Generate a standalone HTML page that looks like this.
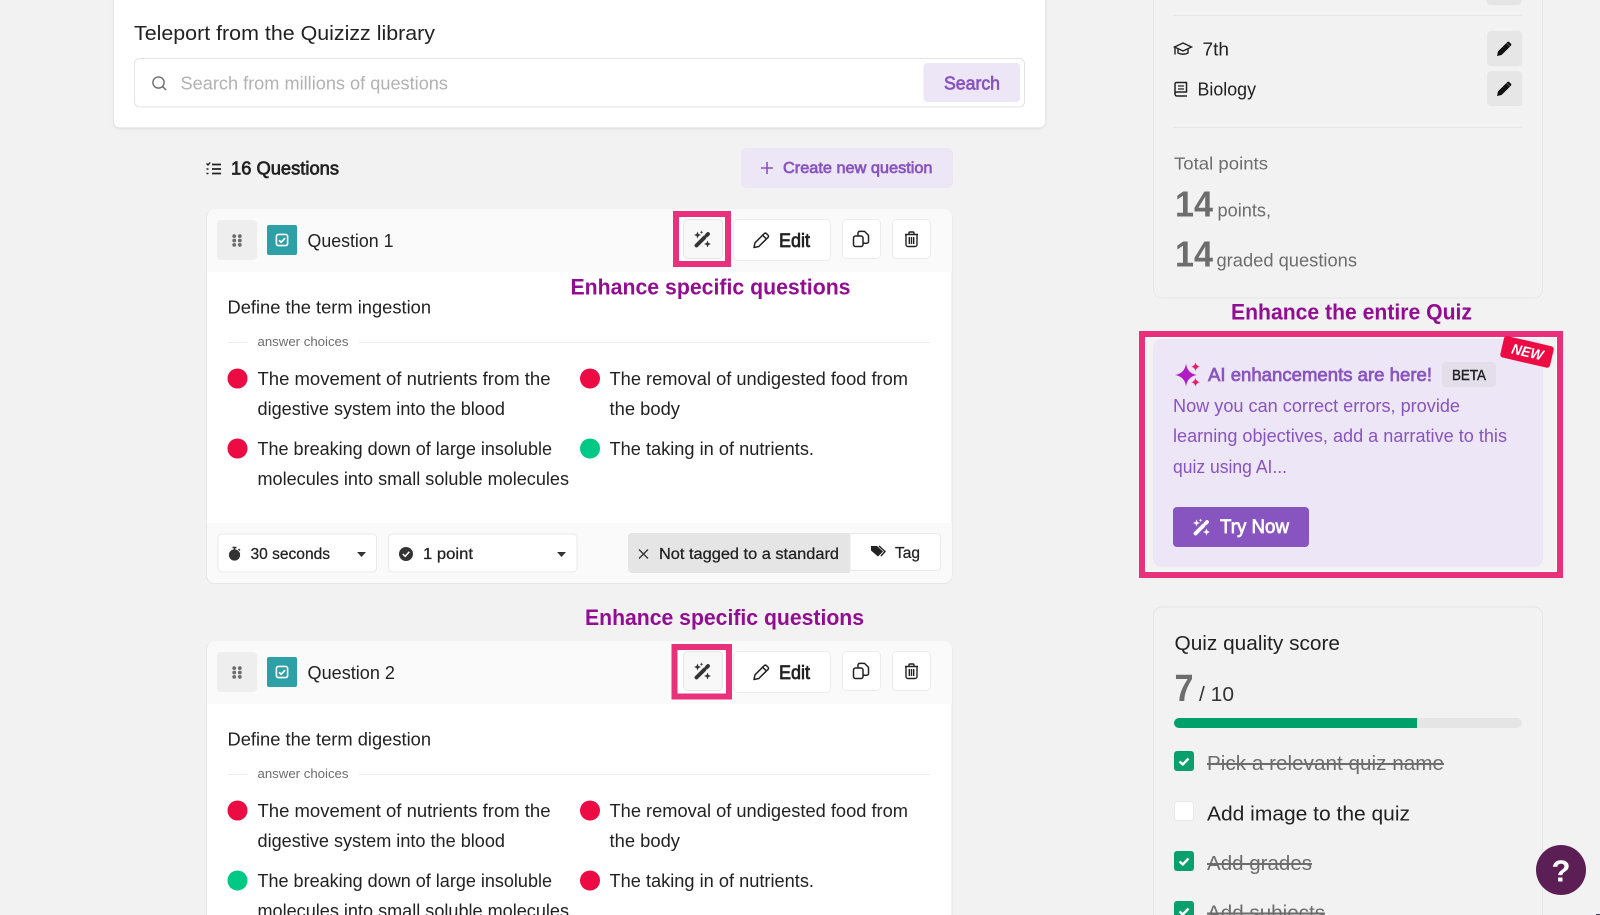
<!DOCTYPE html>
<html lang="en"><head><meta charset="utf-8"><title>Quiz editor</title>
<style>
html,body{margin:0;padding:0;width:1600px;height:915px;overflow:hidden;background:#f2f2f2}
svg{display:block;filter:blur(.3px)}
text{font-family:"Liberation Sans",Arial,sans-serif;fill:#222;white-space:pre}
.b{font-weight:700}
.s{stroke:#222;stroke-width:.7px}
.m{stroke:#222;stroke-width:.25px}
.s.p{stroke:#8854c0}
.s.w{fill:#fff;stroke:#fff}
.g{fill:#6d6d6d}
.p{fill:#8854c0}
.e{font-weight:700;fill:#930d92;font-size:22px}
.st{text-decoration:line-through;fill:#6d6d6d}
.t{font-size:18.5px}
</style></head><body>
<svg xmlns="http://www.w3.org/2000/svg" width="1600" height="915" viewBox="0 0 1600 915">
<defs>
<filter id="sh" x="-5%" y="-5%" width="110%" height="115%"><feDropShadow dx="0" dy="1" stdDeviation="1.5" flood-color="#000" flood-opacity=".12"/></filter>
<g id="wand"><path d="M-5.500 6.500 L2.500-1.500" stroke="currentColor" stroke-width="3.800" stroke-linecap="round" fill="none"/><path d="M4.700-3.700 L6-5" stroke="currentColor" stroke-width="3.800" stroke-linecap="round" fill="none"/><path d="M-4.500-7.500 l1 2.500 2.500 1-2.500 1-1 2.500-1-2.500-2.500-1 2.500-1zM5.500 1.500 l1 2.500 2.500 1-2.500 1-1 2.500-1-2.500-2.500-1 2.500-1zM-.5-8.500 l.5 1.300 1.300 .5-1.300 .5-.5 1.300-.5-1.300-1.300-.5 1.300-.5z" fill="currentColor"/></g>
<g id="pen"><path d="M-7 7.500 L-6 2.800 L3.200-6.400 a1.600 1.600 0 0 1 2.300 0 L7-4.900 a1.600 1.600 0 0 1 0 2.300 L-2.200 6.500 Z M1.600-4.800 L5.400-1" fill="none" stroke="#222" stroke-width="1.500" stroke-linejoin="round"/></g>
<g id="copy"><rect x="-7.500" y="-3" width="9.500" height="10.500" rx="2" fill="none" stroke="#222" stroke-width="1.500"/><path d="M-3-3 V-6 a1.600 1.600 0 0 1 1.600-1.600 H3.500 L7.500-3.600 V2.600 a1.600 1.600 0 0 1-1.600 1.600 H2" fill="none" stroke="#222" stroke-width="1.500"/></g>
<g id="trash"><path d="M-6.500-4.500 H6.500 M-2.500-4.500 V-6 a1 1 0 0 1 1-1 H1.500 a1 1 0 0 1 1 1 V-4.500 M-5.500-4.500 V5.500 a2 2 0 0 0 2 2 H3.500 a2 2 0 0 0 2-2 V-4.500 M-2.200-2 V5 M0-2 V5 M2.200-2 V5" fill="none" stroke="#222" stroke-width="1.400"/></g>
<g id="solidpen"><path d="M-7 7 L-6 2.400 L2.400-6 L6-2.400 L-2.400 6 Z M3.400-7 a1.300 1.300 0 0 1 1.800 0 L7-5.200 a1.300 1.300 0 0 1 0 1.800 L6.200-2.600 L2.600-6.200Z" fill="#111"/></g>
<g id="drag"><g fill="#6d6d6d"><circle cx="-2.800" cy="-4.400" r="1.900"/><circle cx="2.800" cy="-4.400" r="1.900"/><circle cx="-2.800" cy="0" r="1.900"/><circle cx="2.800" cy="0" r="1.900"/><circle cx="-2.800" cy="4.400" r="1.900"/><circle cx="2.800" cy="4.400" r="1.900"/></g></g>
<g id="teal"><rect x="-15" y="-15" width="30" height="30" rx="2" fill="#2d9fa7"/><rect x="-5.600" y="-5.600" width="11.200" height="11.200" rx="2" fill="none" stroke="#fff" stroke-width="1.600"/><path d="M-3 .2 L-.8 2.300 L3-1.800" fill="none" stroke="#fff" stroke-width="1.700"/></g>
<g id="ck"><rect width="20" height="20" rx="3" fill="#09a06e"/><path d="M5.500 10.500 L8.800 13.500 L14.500 7.500" fill="none" stroke="#fff" stroke-width="2.400"/></g>
</defs>

<rect width="1600" height="915" fill="#f2f2f2"/>

<!-- library card -->
<path d="M114-10 H1045 V121.500 a6 6 0 0 1-6 6 H120 a6 6 0 0 1-6-6Z" fill="#fff" filter="url(#sh)"/>
<text x="134" y="40" font-size="20.500" textLength="301" lengthAdjust="spacingAndGlyphs">Teleport from the Quizizz library</text>
<rect x="134.500" y="58.500" width="890" height="48.500" rx="5" fill="#fff" stroke="#e3e3e3"/>
<circle cx="158.500" cy="82.500" r="5.600" fill="none" stroke="#6d6d6d" stroke-width="1.400"/><path d="M162.500 86.500 L166 90" stroke="#6d6d6d" stroke-width="1.500"/>
<text x="180.500" y="89.500" font-size="18" style="fill:#b2b2b2" textLength="267.500" lengthAdjust="spacingAndGlyphs">Search from millions of questions</text>
<rect x="923.500" y="63" width="96.500" height="39" rx="4" fill="#ede6f6"/>
<text x="944" y="89.500" font-size="18.500" class="s p" textLength="56" lengthAdjust="spacingAndGlyphs">Search</text>

<!-- questions header -->
<g stroke="#222" fill="none"><path d="M212 164.500 H221 M212 169 H221 M212 173.500 H221" stroke-width="1.700"/><path d="M206.500 163.500 l1.500 1.500 2.200-2.600 M206.500 169 h2 M206.500 173.500 h2" stroke-width="1.400"/></g>
<text x="231" y="174.500" font-size="18.500" class="s" textLength="108" lengthAdjust="spacingAndGlyphs">16 Questions</text>
<rect x="741" y="148" width="212" height="40" rx="5" fill="#ede6f6"/>
<path d="M767 162 V174 M761 168 H773" stroke="#8854c0" stroke-width="1.600"/>
<text x="783" y="173" font-size="16" class="s p" textLength="149.500" lengthAdjust="spacingAndGlyphs">Create new question</text>

<!-- question 1 -->
<g id="q1">
<rect x="206.500" y="209.500" width="745.500" height="374" rx="8" fill="#fff" stroke="#e6e6e6"/>
<path d="M207 272 V217 a8 8 0 0 1 8-8 H944 a8 8 0 0 1 8 8 V272Z" fill="#fafafa"/>
<path d="M207 523 H952 V575 a8 8 0 0 1-8 8 H215 a8 8 0 0 1-8-8Z" fill="#fafafa"/>
<rect x="217" y="220" width="40" height="40" rx="4" fill="#eee"/>
<use href="#drag" x="237" y="240.500"/>
<use href="#teal" x="282" y="240"/>
<text x="307.500" y="247" class="t" textLength="86" lengthAdjust="spacingAndGlyphs">Question 1</text>
<rect x="676" y="214" width="52" height="50" fill="#fff" stroke="#e8317a" stroke-width="6"/>
<rect x="683.500" y="219.500" width="39" height="39" rx="4" fill="#f8f8f8" stroke="#e6e6e6"/>
<use href="#wand" x="702" y="239" style="color:#333"/>
<rect x="733.500" y="219.500" width="97" height="41" rx="4" fill="#fff" stroke="#ececec"/>
<use href="#pen" x="761" y="240"/>
<text x="779" y="247" font-size="19" class="s" textLength="31" lengthAdjust="spacingAndGlyphs">Edit</text>
<rect x="842.500" y="219.500" width="38" height="39" rx="4" fill="#fff" stroke="#ececec"/>
<use href="#copy" x="861" y="239"/>
<rect x="892.500" y="219.500" width="38" height="39" rx="4" fill="#fff" stroke="#ececec"/>
<use href="#trash" x="911.500" y="239"/>
<text x="227.500" y="313.500" class="t" textLength="203.500" lengthAdjust="spacingAndGlyphs">Define the term ingestion</text>
<path d="M228 342.500 H247 M359 342.500 H931" stroke="#eee"/>
<text x="257.500" y="346" font-size="13" class="g" textLength="91" lengthAdjust="spacingAndGlyphs">answer choices</text>
<circle cx="237.500" cy="378.500" r="10" fill="#ec0b43"/><circle cx="590" cy="378.500" r="10" fill="#ec0b43"/>
<circle cx="237.500" cy="448.500" r="10" fill="#ec0b43"/><circle cx="590" cy="448.500" r="10" fill="#00c985"/>
<text x="257.500" y="385" class="t" textLength="293" lengthAdjust="spacingAndGlyphs">The movement of nutrients from the</text>
<text x="257.500" y="415" class="t" textLength="247.500" lengthAdjust="spacingAndGlyphs">digestive system into the blood</text>
<text x="609.500" y="385" class="t" textLength="298.500" lengthAdjust="spacingAndGlyphs">The removal of undigested food from</text>
<text x="609.500" y="415" class="t" textLength="70.500" lengthAdjust="spacingAndGlyphs">the body</text>
<text x="257.500" y="455" class="t" textLength="294.500" lengthAdjust="spacingAndGlyphs">The breaking down of large insoluble</text>
<text x="257.500" y="485" class="t" textLength="311.500" lengthAdjust="spacingAndGlyphs">molecules into small soluble molecules</text>
<text x="609.500" y="455" class="t" textLength="204.500" lengthAdjust="spacingAndGlyphs">The taking in of nutrients.</text>
<rect x="218" y="534" width="158.500" height="38" rx="4" fill="#fff" stroke="#e9e9e9"/>
<circle cx="234.500" cy="555" r="5.600" fill="#333"/><path d="M232.500 547.500 H236.500 M234.500 548 V551 M238.500 549 L240 550.500" stroke="#333" stroke-width="1.500"/>
<text x="250.500" y="559" font-size="15.500" class="m" textLength="79.500" lengthAdjust="spacingAndGlyphs">30 seconds</text>
<path d="M357 552 H366 L361.500 557Z" fill="#333"/>
<rect x="388.500" y="534" width="188.500" height="38" rx="4" fill="#fff" stroke="#e9e9e9"/>
<circle cx="406" cy="554" r="7" fill="#333"/><path d="M402.800 554 L405.200 556.300 L409.300 551.800" fill="none" stroke="#fff" stroke-width="1.500"/>
<text x="423" y="559" font-size="15.500" class="m" textLength="50" lengthAdjust="spacingAndGlyphs">1 point</text>
<path d="M557 552 H566 L561.500 557Z" fill="#333"/>
<path d="M850 533 H632 a4 4 0 0 0-4 4 V569 a4 4 0 0 0 4 4 H850Z" fill="#e5e5e5"/>
<path d="M639 549.500 L648 558.500 M648 549.500 L639 558.500" stroke="#333" stroke-width="1.300"/>
<text x="659" y="559" font-size="15.500" class="m" textLength="180" lengthAdjust="spacingAndGlyphs">Not tagged to a standard</text>
<path d="M850 533.500 H937 a3.500 3.500 0 0 1 3.500 3.500 V567 a3.500 3.500 0 0 1-3.500 3.500 H850Z" fill="#fff" stroke="#e9e9e9"/>
<path d="M871 546 h6 l6 5.500 -5 5 -7-6Z" fill="#222"/><path d="M879 546 l6 5.500 -4 4.500" fill="none" stroke="#222" stroke-width="1.400"/>
<text x="895" y="558" font-size="15.500" class="m" textLength="25" lengthAdjust="spacingAndGlyphs">Tag</text>
</g>

<text x="570.500" y="294.500" class="e" textLength="280" lengthAdjust="spacingAndGlyphs">Enhance specific questions</text>
<text x="585" y="625" class="e" textLength="279" lengthAdjust="spacingAndGlyphs">Enhance specific questions</text>

<!-- question 2 -->
<rect x="206.500" y="641.500" width="745.500" height="300" rx="8" fill="#fff" stroke="#e6e6e6"/>
<path d="M207 704 V649 a8 8 0 0 1 8-8 H944 a8 8 0 0 1 8 8 V704Z" fill="#fafafa"/>
<rect x="217" y="652" width="40" height="40" rx="4" fill="#eee"/>
<use href="#drag" x="237" y="672.500"/>
<use href="#teal" x="282" y="672"/>
<text x="307.500" y="679" class="t" textLength="87.500" lengthAdjust="spacingAndGlyphs">Question 2</text>
<rect x="674.500" y="647" width="54.500" height="49.500" fill="#fff" stroke="#e8317a" stroke-width="6"/>
<rect x="683.500" y="651.500" width="39" height="39" rx="4" fill="#f8f8f8" stroke="#e6e6e6"/>
<use href="#wand" x="702" y="671" style="color:#333"/>
<rect x="733.500" y="651.500" width="97" height="41" rx="4" fill="#fff" stroke="#ececec"/>
<use href="#pen" x="761" y="672"/>
<text x="779" y="679" font-size="19" class="s" textLength="31" lengthAdjust="spacingAndGlyphs">Edit</text>
<rect x="842.500" y="651.500" width="38" height="39" rx="4" fill="#fff" stroke="#ececec"/>
<use href="#copy" x="861" y="671"/>
<rect x="892.500" y="651.500" width="38" height="39" rx="4" fill="#fff" stroke="#ececec"/>
<use href="#trash" x="911.500" y="671"/>
<text x="227.500" y="745.500" class="t" textLength="203.500" lengthAdjust="spacingAndGlyphs">Define the term digestion</text>
<path d="M228 774.500 H247 M359 774.500 H931" stroke="#eee"/>
<text x="257.500" y="778" font-size="13" class="g" textLength="91" lengthAdjust="spacingAndGlyphs">answer choices</text>
<circle cx="237.500" cy="810.500" r="10" fill="#ec0b43"/><circle cx="590" cy="810.500" r="10" fill="#ec0b43"/>
<circle cx="237.500" cy="880.500" r="10" fill="#00c985"/><circle cx="590" cy="880.500" r="10" fill="#ec0b43"/>
<text x="257.500" y="817" class="t" textLength="293" lengthAdjust="spacingAndGlyphs">The movement of nutrients from the</text>
<text x="257.500" y="847" class="t" textLength="247.500" lengthAdjust="spacingAndGlyphs">digestive system into the blood</text>
<text x="609.500" y="817" class="t" textLength="298.500" lengthAdjust="spacingAndGlyphs">The removal of undigested food from</text>
<text x="609.500" y="847" class="t" textLength="70.500" lengthAdjust="spacingAndGlyphs">the body</text>
<text x="257.500" y="887" class="t" textLength="294.500" lengthAdjust="spacingAndGlyphs">The breaking down of large insoluble</text>
<text x="257.500" y="917" class="t" textLength="311.500" lengthAdjust="spacingAndGlyphs">molecules into small soluble molecules</text>
<text x="609.500" y="887" class="t" textLength="204.500" lengthAdjust="spacingAndGlyphs">The taking in of nutrients.</text>

<!-- right info card -->
<path d="M1153.500-10 V290 a8 8 0 0 0 8 8 H1534.500 a8 8 0 0 0 8-8 V-10" fill="none" stroke="#e6e6e6"/>
<rect x="1486.500" y="-6" width="35" height="11" rx="4" fill="#e5e5e5"/>
<path d="M1174 15.500 H1521.500 M1174 127.500 H1521.500" stroke="#e6e6e6"/>
<g fill="none" stroke="#222" stroke-width="1.400"><path d="M1174.500 47 L1183 43 L1191.500 47 L1183 51Z"/><path d="M1178 49 V53 q5 2.500 10 0 V49 M1175 47.500 V54.500"/></g>
<text x="1202.500" y="55.500" class="t" textLength="26.500" lengthAdjust="spacingAndGlyphs">7th</text>
<rect x="1487" y="31" width="35" height="35" rx="4" fill="#e6e6e6"/><use href="#solidpen" x="1504" y="49"/>
<rect x="1487" y="71" width="35" height="35" rx="4" fill="#e6e6e6"/><use href="#solidpen" x="1504" y="89"/>
<g fill="none" stroke="#222" stroke-width="1.500"><path d="M1175 94 V84 a1.500 1.500 0 0 1 1.500-1.500 H1186.500 V92 H1177 a2 2 0 0 0-2 2 a2 2 0 0 0 2 2 H1187"/><path d="M1178 86 H1184 M1178 89 H1184" stroke-width="1.200"/></g>
<text x="1197.500" y="95.500" class="t" textLength="58.500" lengthAdjust="spacingAndGlyphs">Biology</text>
<text x="1174" y="169.500" font-size="17.500" class="g" textLength="94" lengthAdjust="spacingAndGlyphs">Total points</text>
<text x="1175" y="216.500" font-size="36" class="b g" textLength="38" lengthAdjust="spacingAndGlyphs">14</text>
<text x="1217.500" y="216.500" font-size="18" class="g" textLength="53.500" lengthAdjust="spacingAndGlyphs">points,</text>
<text x="1175" y="266.500" font-size="36" class="b g" textLength="38" lengthAdjust="spacingAndGlyphs">14</text>
<text x="1216.500" y="266.500" font-size="18" class="g" textLength="140.500" lengthAdjust="spacingAndGlyphs">graded questions</text>

<text x="1231" y="319.500" class="e" textLength="241" lengthAdjust="spacingAndGlyphs">Enhance the entire Quiz</text>

<!-- AI card -->
<rect x="1142" y="334" width="418" height="241" fill="#f4f3f4" stroke="#e8317a" stroke-width="6"/>
<rect x="1145.500" y="337.500" width="411" height="234" fill="none" stroke="#fff"/>
<rect x="1153" y="339" width="390" height="228" rx="9" fill="#ede6f6"/>
<path d="M1186 363.500 q1.300 10 11 11.500 q-9.700 1.500 -11 11.500 q-1.300-10 -11-11.500 q9.700-1.500 11-11.500Z" fill="#b21ac6"/>
<path d="M1195.500 362.500 q.8 3.500 4.200 4.200 q-3.400 .7 -4.200 4.200 q-.8-3.500 -4.200-4.200 q3.400-.7 4.200-4.200Z M1195.500 378 q.8 3.500 4.200 4.200 q-3.400 .7 -4.200 4.200 q-.8-3.500 -4.200-4.200 q3.400-.7 4.200-4.200Z" fill="#ec1a6a"/>
<text x="1208" y="381" font-size="18.500" class="s p" textLength="224" lengthAdjust="spacingAndGlyphs">AI enhancements are here!</text>
<rect x="1442" y="362" width="54" height="25" rx="4" fill="#e3deea"/>
<text x="1452" y="380" font-size="14.500" class="s" style="stroke-width:.4px" textLength="34" lengthAdjust="spacingAndGlyphs">BETA</text>
<g transform="translate(1527.500 352) rotate(13)">
<rect x="-26" y="-11" width="51" height="22" rx="3" fill="#ec0b43"/>
<text x="-16" y="5" font-size="14.500" font-style="italic" class="b" style="fill:#fff" textLength="32" lengthAdjust="spacingAndGlyphs">NEW</text>
</g>
<text x="1173" y="412" class="t p" textLength="287" lengthAdjust="spacingAndGlyphs">Now you can correct errors, provide</text>
<text x="1173" y="442" class="t p" textLength="334" lengthAdjust="spacingAndGlyphs">learning objectives, add a narrative to this</text>
<text x="1173" y="473" class="t p" textLength="114" lengthAdjust="spacingAndGlyphs">quiz using AI...</text>
<rect x="1173" y="507" width="136" height="40" rx="4" fill="#8854c0"/>
<use href="#wand" x="1201" y="527" style="color:#fff"/>
<text x="1220" y="533" font-size="19" class="s w" textLength="69" lengthAdjust="spacingAndGlyphs">Try Now</text>

<!-- quality card -->
<path d="M1153.500 925 V615 a8 8 0 0 1 8-8 H1534.500 a8 8 0 0 1 8 8 V925" fill="none" stroke="#e6e6e6"/>
<text x="1174.500" y="650" font-size="20.500" textLength="165.500" lengthAdjust="spacingAndGlyphs">Quiz quality score</text>
<text x="1174.500" y="701" font-size="38" class="b g" textLength="19" lengthAdjust="spacingAndGlyphs">7</text>
<text x="1199" y="701" font-size="20.500" style="fill:#333" textLength="35" lengthAdjust="spacingAndGlyphs">/ 10</text>
<rect x="1174" y="718" width="348" height="10" rx="5" fill="#e5e5e5"/>
<path d="M1417 718 H1179 a5 5 0 0 0 0 10 H1417Z" fill="#00a06a"/>
<use href="#ck" x="1174" y="751"/>
<text x="1207" y="770" font-size="20.500" class="st" textLength="237" lengthAdjust="spacingAndGlyphs">Pick a relevant quiz name</text>
<rect x="1174.500" y="801.500" width="19" height="19" rx="3" fill="#fff" stroke="#e9e9e9"/>
<text x="1207" y="820.500" font-size="20.500" textLength="203" lengthAdjust="spacingAndGlyphs">Add image to the quiz</text>
<use href="#ck" x="1174" y="851"/>
<text x="1207" y="870" font-size="20.500" class="st" textLength="105" lengthAdjust="spacingAndGlyphs">Add grades</text>
<use href="#ck" x="1174" y="901"/>
<text x="1207" y="919.500" font-size="20.500" class="st" textLength="118" lengthAdjust="spacingAndGlyphs">Add subjects</text>

<!-- help -->
<circle cx="1561" cy="870" r="25" fill="#5b1f55"/>
<text x="1561" y="881.500" font-size="31" class="b" text-anchor="middle" style="fill:#fff">?</text>
<rect x="1596" y="914" width="4" height="1" fill="#4a3a6a"/>
</svg>
</body></html>
